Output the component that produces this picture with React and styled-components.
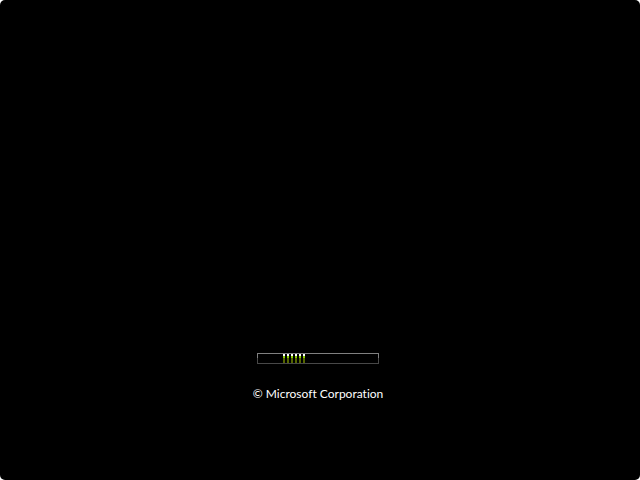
import React from "react";
import styled, { createGlobalStyle } from "styled-components";

const segments = [0, 1, 2, 3, 4, 5];

export default function App() {
  return (
    <>
      <GlobalStyle />
      <StyledBootScreen>
        <StyledProgress role="progressbar" aria-labelledby="copyright">
          <StyledSegments>
            {segments.map((segment) => (
              <StyledSegment key={segment} />
            ))}
          </StyledSegments>
        </StyledProgress>
        <StyledCopyright id="copyright">© Microsoft Corporation</StyledCopyright>
      </StyledBootScreen>
    </>
  );
}

const GlobalStyle = createGlobalStyle`
  * {
    box-sizing: border-box;
  }
  body {
    margin: 0;
    background: #fff;
  }
`;

const StyledBootScreen = styled.main`
  display: flex;
  flex-direction: column;
  align-items: center;
  justify-content: flex-end;
  gap: 22px;
  min-height: 100vh;
  padding: 0 4px 78px 0;
  background: #000;
  border-radius: 5px;
`;

/* The frame is lighter on its upper half */
const StyledProgress = styled.div`
  width: 122px;
  height: 11px;
  padding: 1px;
  background: linear-gradient(#000, #000) content-box,
    linear-gradient(#808080 5px, #484848 5px);
`;

const StyledSegments = styled.div`
  display: flex;
  gap: 2px;
  height: 100%;
  padding-left: 25px;
`;

const StyledSegment = styled.span`
  width: 2px;
  background: linear-gradient(
    #fff 2px,
    #8c0 2px,
    #8c0 4px,
    #560 4px
  );
`;

const StyledCopyright = styled.p`
  margin: 0;
  color: #fff;
  font-family: Lato, "Open Sans", sans-serif;
  font-size: 12px;
  font-variant-ligatures: none;
  line-height: 16px;
`;
